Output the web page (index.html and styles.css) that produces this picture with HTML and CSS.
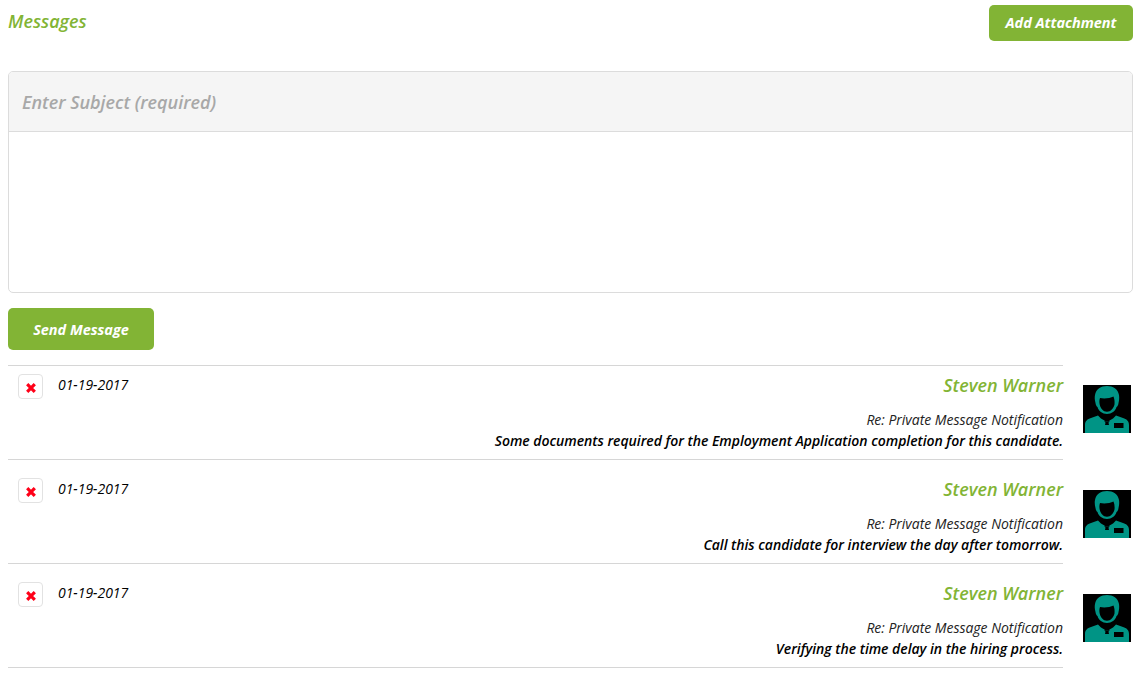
FILE: index.html
```html
<!DOCTYPE html>
<html lang="en">
<head>
<meta charset="utf-8">
<title>Messages</title>
<link rel="stylesheet" href="styles.css">
</head>
<body>
<svg class="defs" width="0" height="0" aria-hidden="true">
  <symbol id="agent" viewBox="0 0 48 48">
    <rect width="48" height="48" fill="#000"/>
    <path fill="#009485" d="M2 48V40C2 36 4.500 34 8 33L15 30.500 18 33.500 24 37 30 33.500 33 30.500 40 33C43.500 34 46 36 46 40V48Z"/>
    <path fill="#000" d="M21 35.500 24 37 27 35.500 25.500 37.800 26 40H22L22.500 37.800Z"/>
    <path fill="#009485" d="M24 1C30 1 35 4 36 10C36.500 13 36 16 35.500 18 35.300 20 34.500 21.500 33.500 22 32.500 26 28.500 29 24 29 19.500 29 15.500 26 14.500 22 13.500 21.500 12.800 20 12.500 18 11.700 15 11.500 12 12 10 13 4 18 1 24 1Z"/>
    <path fill="#000" d="M17 13C20.500 14 27 13.500 30.500 11.500 31.500 14 31.800 16.500 31.500 19.500 30.500 23.500 27.800 26.700 24 26.700 20.200 26.700 17.500 23.500 16.700 19.500 16.200 17 16.300 15 17 13Z"/>
    <rect x="31" y="38" width="9.500" height="5" fill="#000"/>
  </symbol>
  <symbol id="cross" viewBox="0 0 10 10">
    <path d="M1.200 1.200 8.800 8.800M8.800 1.200 1.200 8.800" stroke="#ff0018" stroke-width="3.200" fill="none"/>
  </symbol>
</svg>
<div class="page">
  <header class="top">
    <h2 class="title">Messages</h2>
    <button class="btn btn-attach" type="button">Add Attachment</button>
  </header>
  <section class="composer">
    <div class="subject">Enter Subject (required)</div>
    <div class="body-field"></div>
  </section>
  <button class="btn btn-send" type="button">Send Message</button>
  <div class="list">
    <article class="msg">
      <div class="msg-main">
        <div class="del"><svg class="cross"><use href="#cross"/></svg></div>
        <div class="date">01-19-2017</div>
        <div class="text">
          <div class="name">Steven Warner</div>
          <div class="re">Re: Private Message Notification</div>
          <div class="line">Some documents required for the Employment Application completion for this candidate.</div>
        </div>
      </div>
      <svg class="avatar"><use href="#agent"/></svg>
    </article>
    <article class="msg">
      <div class="msg-main">
        <div class="del"><svg class="cross"><use href="#cross"/></svg></div>
        <div class="date">01-19-2017</div>
        <div class="text">
          <div class="name">Steven Warner</div>
          <div class="re">Re: Private Message Notification</div>
          <div class="line">Call this candidate for interview the day after tomorrow.</div>
        </div>
      </div>
      <svg class="avatar"><use href="#agent"/></svg>
    </article>
    <article class="msg">
      <div class="msg-main">
        <div class="del"><svg class="cross"><use href="#cross"/></svg></div>
        <div class="date">01-19-2017</div>
        <div class="text">
          <div class="name">Steven Warner</div>
          <div class="re">Re: Private Message Notification</div>
          <div class="line">Verifying the time delay in the hiring process.</div>
        </div>
      </div>
      <svg class="avatar"><use href="#agent"/></svg>
    </article>
  </div>
</div>
</body>
</html>
```
FILE: styles.css
```css
* { box-sizing: border-box; }
html, body { margin: 0; background: #fff; }
body {
  font-family: "Open Sans", sans-serif;
  font-style: italic;
  color: #000;
  letter-spacing: -0.025px;
}
.defs { position: absolute; }
.page { width: 1142px; height: 676px; overflow: hidden; padding: 5px 9px 0 8px; }
.top { display: flex; justify-content: space-between; align-items: flex-start; height: 66px; }
.title {
  margin: 4px 0 0;
  font-size: 18px;
  line-height: 25px;
  font-weight: 600;
  color: #82b435;
}
.btn {
  display: block;
  border: 0;
  border-radius: 5px;
  background: #82b435;
  color: #fff;
  font-family: inherit;
  font-style: italic;
  font-weight: 700;
  font-size: 14.5px;
  letter-spacing: inherit;
  padding: 0;
}
.btn-attach { width: 144px; height: 36px; padding-bottom: 2px; }
.btn-send { width: 146px; height: 42px; margin-top: 15px; }
.composer {
  height: 222px;
  border: 1px solid #dcdcdc;
  border-radius: 5px;
  overflow: hidden;
}
.subject {
  height: 60px;
  padding: 0 13px;
  background: #f5f5f5;
  border-bottom: 1px solid #dcdcdc;
  font-size: 18px;
  font-weight: 600;
  line-height: 60px;
  color: #a8a8a8;
}
.list { margin-top: 15px; }
.msg { display: flex; align-items: flex-start; }
.msg-main {
  width: 1055px;
  height: 104px;
  display: flex;
  align-items: flex-start;
  padding: 18px 0 0 10px;
  border-bottom: 1px solid #d6d6d6;
}
.msg:first-child .msg-main {
  height: 95px;
  padding-top: 8px;
  border-top: 1px solid #d6d6d6;
}
.del {
  width: 25px;
  height: 25px;
  display: flex;
  align-items: center;
  justify-content: center;
  border: 1px solid #e2e2e2;
  border-radius: 4px;
  padding-top: 2px;
}
.cross { display: block; width: 10px; height: 10px; }
.date { margin: 1px 0 0 15px; font-size: 14px; line-height: 19px; }
.text { flex: 1; text-align: right; }
.name { font-size: 18px; font-weight: 600; line-height: 25px; color: #82b435; margin-top: -1px; }
.re { font-size: 14px; line-height: 19px; margin-top: 12px; color: #222; }
.line { font-size: 14px; font-weight: 600; line-height: 19px; margin-top: 2px; }
.avatar { display: block; width: 48px; height: 48px; margin: 30px 0 0 20px; flex: none; }
.msg:first-child .avatar { margin-top: 20px; }
```
